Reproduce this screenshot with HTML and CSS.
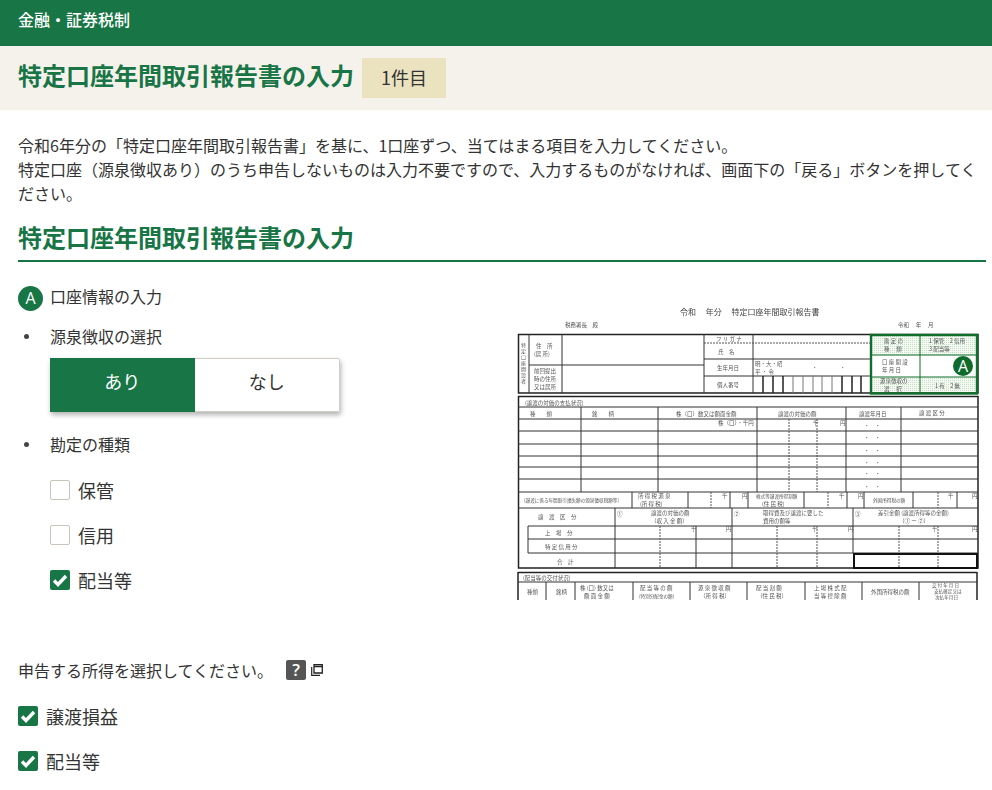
FILE: index.html
```html
<!DOCTYPE html>
<html lang="ja">
<head>
    <meta charset="UTF-8">
    <meta name="viewport" content="width=device-width, initial-scale=1.0">
    <title>特定口座年間取引報告書の入力</title>
    <link rel="stylesheet" href="styles.css">
</head>
<body>
    <header class="top-bar">金融・証券税制</header>
    <div class="title-bar">
        <h1>特定口座年間取引報告書の入力</h1>
        <span class="count">1件目</span>
    </div>
    <main class="content">
        <p class="lead">令和6年分の「特定口座年間取引報告書」を基に、1口座ずつ、当てはまる項目を入力してください。<br>特定口座（源泉徴収あり）のうち申告しないものは入力不要ですので、入力するものがなければ、画面下の「戻る」ボタンを押してください。</p>
        <h2>特定口座年間取引報告書の入力</h2>

        <div class="columns">
            <div class="form-col">
                <div class="section-head"><span class="badge">A</span><span class="section-name">口座情報の入力</span></div>
                <div class="bullet first">源泉徴収の選択</div>
                <div class="toggle">
                    <button class="on">あり</button>
                    <button>なし</button>
                </div>
                <div class="bullet second">勘定の種類</div>
                <div class="checks indented">
                    <label class="check"><span class="box"></span>保管</label>
                    <label class="check"><span class="box"></span>信用</label>
                    <label class="check"><span class="box checked"><svg viewBox="0 0 20 20"><path d="M4 10.5l4 4 8-8.5" fill="none" stroke="#fff" stroke-width="3.4"/></svg></span>配当等</label>
                </div>
            </div>
            <svg class="report" viewBox="510 300 482 300" width="482" height="300">
                <defs>
                    <pattern id="dots" width="2" height="2" patternUnits="userSpaceOnUse">
                        <rect width="2" height="2" fill="#f4f9f2"/>
                        <rect width="1" height="1" fill="#c6e0c7"/>
                    </pattern>
                </defs>
                <g class="paper">
                    <rect x="871" y="335" width="106" height="58" fill="url(#dots)"/>
                    <rect x="871" y="356" width="106" height="21" fill="#fff"/>

                    <path class="heavy" d="M518.5 334.5H978V393H518.5ZM518.5 396.5H978V568H518.5ZM518 572.5H977M518 572V600M977 572V600"/>
                    <path class="line" d="M529 334V393M562 334V393M704 334V393M753 334V393M529 365H704M704 359H870M704 376H870"/>
                    <path class="dash" d="M704 343H870"/>
                    <path class="heavy" d="M763 376V393M773 376V393M783 376V393M842 376V393M852 376V393M861 376V393"/>
                    <path class="line light" d="M793 376V393M803 376V393M813 376V393M822 376V393M832 376V393"/>

                    <path class="line" d="M518 407H978M518 419H978M518 431H978M518 444H978M518 456H978M518 467H978M518 479H978M518 492H978M518 508H978M528 526H978M528 539H978M528 553H978"/>
                    <path class="line" d="M581 407V492M658 407V492M757 407V492M846 407V492M901 407V492"/>
                    <path class="dash" d="M789 419V492M817 419V492"/>
                    <path class="line" d="M632 492V508M688 492V508M730 492V508M748 492V508M804 492V508M847 492V508M864 492V508M913 492V508M957 492V508"/>
                    <path class="dash" d="M711 492V508M828 492V508M938 492V508"/>
                    <path class="line" d="M615 508V568M732 508V568M853 508V553M528 526V553"/>
                    <path class="line" d="M696 526V568"/>
                    <path class="dash" d="M660 526V568M777 526V568M817 526V568M899 526V568M938 526V568"/>
                    <rect class="bold-box" x="854" y="554" width="123" height="14"/>

                    <path class="line" d="M518 582H977M546 582V600M575 582V600M633 582V600M690 582V600M747 582V600M805 582V600M862 582V600M919 582V600"/>

                    <g class="tiny">
                        <text class="title" x="680" y="315">令和　 年分　 特定口座年間取引報告書</text>
                        <text x="565" y="327">税務署長　殿</text>
                        <text x="898" y="327">令和　  年　  月</text>

                        <text x="523.5" y="343" class="v">特定口座開設者</text>
                        <text x="536" y="348">住　所</text>
                        <text x="534" y="356">(居 所)</text>
                        <text x="534" y="373">前回提出</text>
                        <text x="534" y="381">時の住所</text>
                        <text x="534" y="389">又は居所</text>
                        <text x="716" y="341">フ リ ガ ナ</text>
                        <text x="718" y="354">氏　名</text>
                        <text x="717" y="370">生年月日</text>
                        <text x="717" y="387">個人番号</text>
                        <text x="755" y="366">明・大・昭</text>
                        <text x="755" y="374">平 ・ 令</text>
                        <text x="812" y="370">・</text>
                        <text x="840" y="370">・</text>
                        <text x="884" y="343">勘 定 の</text>
                        <text x="884" y="351">種　 類</text>
                        <text x="929" y="343">1 保管　2 信用</text>
                        <text x="929" y="351">3 配当等</text>
                        <text x="882" y="364">口 座 開 設</text>
                        <text x="882" y="372">年 月 日</text>
                        <text x="880" y="383">源泉徴収の</text>
                        <text x="884" y="391">選　 択</text>
                        <text x="935" y="388">1 有　2 無</text>

                        <text x="525" y="405">(譲渡の対価の支払状況)</text>
                        <text x="530" y="416">種　　類</text>
                        <text x="592" y="416">銘　　柄</text>
                        <text x="676" y="416">株（口）数又は額面金額</text>
                        <text x="778" y="416">譲渡の対価の額</text>
                        <text x="859" y="416">譲渡年月日</text>
                        <text x="919" y="415">譲 渡 区 分</text>
                        <text x="718" y="425">株（口）・千円</text>
                        <text x="813" y="425">千</text>
                        <text x="840" y="425">円</text>
                        <text x="864" y="428">・　・</text>
                        <text x="864" y="440">・　・</text>
                        <text x="864" y="453">・　・</text>
                        <text x="864" y="465">・　・</text>
                        <text x="864" y="476">・　・</text>
                        <text x="864" y="489">・　・</text>

                        <text class="micro" x="524" y="502">(譲渡に係る年間取引損失額の源泉徴収税額等)</text>
                        <text x="638" y="498">所 得 税 源 泉</text>
                        <text x="640" y="506">(所 得 税)</text>
                        <text x="722" y="498">千</text>
                        <text x="742" y="498">円</text>
                        <text class="micro" x="756" y="498">株式等譲渡所得割額</text>
                        <text x="762" y="506">(住 民 税)</text>
                        <text x="839" y="498">千</text>
                        <text x="858" y="498">円</text>
                        <text class="micro" x="873" y="502">外国所得税の額</text>
                        <text x="948" y="498">千</text>
                        <text x="972" y="498">円</text>

                        <text x="538" y="519">譲　渡　区　分</text>
                        <text x="617" y="516">①</text>
                        <text x="651" y="515">譲渡の対価の額</text>
                        <text x="651" y="523">（収 入 金 額）</text>
                        <text x="734" y="516">②</text>
                        <text x="763" y="515">取得費及び譲渡に要した</text>
                        <text x="763" y="523">費用の額等</text>
                        <text x="855" y="516">③</text>
                        <text x="878" y="515">差引金額 (譲渡所得等の金額)</text>
                        <text x="899" y="523">（① ー ②）</text>
                        <text x="691" y="531">千</text>
                        <text x="726" y="531">円</text>
                        <text x="812" y="531">千</text>
                        <text x="848" y="531">円</text>
                        <text x="932" y="531">千</text>
                        <text x="972" y="531">円</text>
                        <text x="545" y="535">上　場　分</text>
                        <text x="545" y="549">特 定 信 用 分</text>
                        <text x="557" y="564">合　計</text>

                        <text x="523" y="580">(配当等の交付状況)</text>
                        <text x="527" y="594">種類</text>
                        <text x="556" y="594">銘柄</text>
                        <text x="580" y="590">株 (口) 数又は</text>
                        <text x="584" y="598">額 面 金 額</text>
                        <text x="640" y="590">配 当 等 の 額</text>
                        <text class="micro" x="639" y="598">(特別分配金の額)</text>
                        <text x="698" y="590">源 泉 徴 収 額</text>
                        <text x="700" y="598">（所 得 税）</text>
                        <text x="756" y="590">配 当 割 額</text>
                        <text x="757" y="598">（住 民 税）</text>
                        <text x="814" y="590">上 場 株 式 配</text>
                        <text x="814" y="598">当 等 控 除 額</text>
                        <text x="871" y="594">外国所得税の額</text>
                        <text class="micro" x="932" y="587">交 付 年 月 日</text>
                        <text class="micro" x="934" y="593">支払確定又は</text>
                        <text class="micro" x="935" y="599">次払年月日</text>
                    </g>
                </g>
                <rect class="green-frame" x="871" y="335" width="106" height="58.5"/>
                <path class="green-line" d="M871 355H977M871 377H977M920 335V393"/>
                <circle class="mark" cx="963" cy="366" r="10"/>
                <text class="mark-letter" x="963" y="371.5">A</text>
            </svg>
        </div>

        <div class="question">
            <span>申告する所得を選択してください。</span>
            <span class="help">?</span>
            <svg class="popup" viewBox="0 0 12 12" width="12" height="12"><path d="M3 .7h8.3v8.3H3zM3 2.5h8.3" fill="none" stroke="#222" stroke-width="1.3"/><path d="M.7 3v8.3H9" fill="none" stroke="#222" stroke-width="1.2"/></svg>
        </div>
        <div class="checks">
            <label class="check"><span class="box checked"><svg viewBox="0 0 20 20"><path d="M4 10.5l4 4 8-8.5" fill="none" stroke="#fff" stroke-width="3.4"/></svg></span>譲渡損益</label>
            <label class="check"><span class="box checked"><svg viewBox="0 0 20 20"><path d="M4 10.5l4 4 8-8.5" fill="none" stroke="#fff" stroke-width="3.4"/></svg></span>配当等</label>
        </div>
    </main>
</body>
</html>
```

FILE: styles.css
```css
body {
    margin: 0;
    font-family: "Noto Sans CJK JP", "Noto Sans", sans-serif;
    font-size: 16px;
    color: #333;
    background-color: #fff;
    overflow: hidden;
}
.top-bar {
    height: 46px;
    padding: 0 18px;
    line-height: 38px;
    font-weight: 500;
    color: #fff;
    background-color: #187546;
}
.title-bar {
    display: flex;
    align-items: center;
    gap: 8px;
    height: 64px;
    padding: 0 18px;
    background-color: #f5f2ec;
}
h1 {
    margin: 0;
    padding-bottom: 6px;
    font-size: 24px;
    line-height: 32px;
    color: #187546;
}
.count {
    width: 84px;
    height: 40px;
    line-height: 38px;
    text-align: center;
    font-size: 18px;
    background-color: #ebe2c0;
}
.content {
    padding: 0 6px 0 18px;
}
.lead {
    margin: 23px 0 0;
    line-height: 24px;
}
h2 {
    margin: 13px 0 0;
    padding-bottom: 5px;
    font-size: 24px;
    line-height: 37px;
    color: #187546;
    border-bottom: 2px solid #187546;
}
.columns {
    display: flex;
    justify-content: space-between;
    height: 361px;
    margin-top: 23px;
    margin-right: -6px;
}
.section-head {
    display: flex;
    align-items: center;
    gap: 7px;
    height: 26px;
}
.section-name {
    padding-bottom: 4px;
}
.badge {
    width: 25px;
    height: 25px;
    border-radius: 50%;
    line-height: 25px;
    text-align: center;
    color: #fff;
    background-color: #187546;
    font-family: "Open Sans", sans-serif;
}
.bullet {
    position: relative;
    padding-left: 32px;
    line-height: 24px;
}
.bullet::before {
    content: "";
    position: absolute;
    left: 6px;
    top: 10px;
    width: 5px;
    height: 5px;
    border-radius: 50%;
    background-color: #444;
}
.bullet.first {
    margin-top: 13px;
}
.bullet.second {
    margin-top: 20px;
}
.toggle {
    display: flex;
    width: 290px;
    height: 54px;
    margin: 10px 0 0 32px;
    box-shadow: 1px 3px 5px rgba(0, 0, 0, 0.3);
    border-radius: 2px;
}
.toggle button {
    flex: 1;
    border: 1px solid #d3cdc5;
    border-left: 0;
    border-radius: 0 2px 2px 0;
    padding: 0 0 8px;
    font-family: inherit;
    font-size: 18px;
    color: #333;
    background-color: #fff;
}
.toggle button.on {
    border: 0;
    border-radius: 0;
    color: #fff;
    background-color: #187546;
}
.checks {
    display: flex;
    flex-direction: column;
    gap: 15px;
}
.checks.indented {
    margin: 19px 0 0 32px;
}
.check {
    display: flex;
    align-items: center;
    gap: 8px;
    height: 30px;
    font-size: 18px;
}
.box {
    box-sizing: border-box;
    width: 20px;
    height: 20px;
    border: 1px solid #c9c4bc;
    border-radius: 2px;
    background-color: #fff;
}
.box.checked {
    border: 0;
    background-color: #187546;
}
.box svg {
    display: block;
}
.report {
    flex: none;
    display: block;
    margin-top: 15px;
}
.paper {
    filter: blur(0.35px);
}
.heavy {
    fill: none;
    stroke: #222;
    stroke-width: 1.5;
}
.line {
    fill: none;
    stroke: #333;
    stroke-width: 1;
}
.light {
    stroke: #777;
}
.dash {
    fill: none;
    stroke: #555;
    stroke-width: 1;
    stroke-dasharray: 2 1;
}
.bold-box {
    fill: none;
    stroke: #111;
    stroke-width: 2;
}
.tiny text {
    font-size: 5.5px;
    fill: #555;
}
.tiny text.title {
    font-size: 8px;
    fill: #444;
}
.tiny text.micro {
    font-size: 4.6px;
}
.tiny text.v {
    writing-mode: vertical-rl;
    font-size: 5px;
    letter-spacing: 1px;
}
.green-frame {
    fill: none;
    stroke: #0f6f2a;
    stroke-width: 2.4;
}
.green-line {
    fill: none;
    stroke: #0f6f2a;
    stroke-width: 1;
}
.mark {
    fill: #0f6b2c;
}
.mark-letter {
    font-family: "Open Sans", sans-serif;
    font-size: 16px;
    text-anchor: middle;
    fill: #fff;
}
.question {
    display: flex;
    align-items: center;
    height: 24px;
    margin-top: 12px;
}
.help {
    width: 20px;
    height: 20px;
    margin-left: 13px;
    border-radius: 2px;
    line-height: 20px;
    text-align: center;
    font-family: "Open Sans", sans-serif;
    font-size: 17px;
    font-weight: 600;
    color: #fff;
    background-color: #555;
}
.popup {
    margin-left: 5px;
}
.question + .checks {
    margin-top: 19px;
}
```
